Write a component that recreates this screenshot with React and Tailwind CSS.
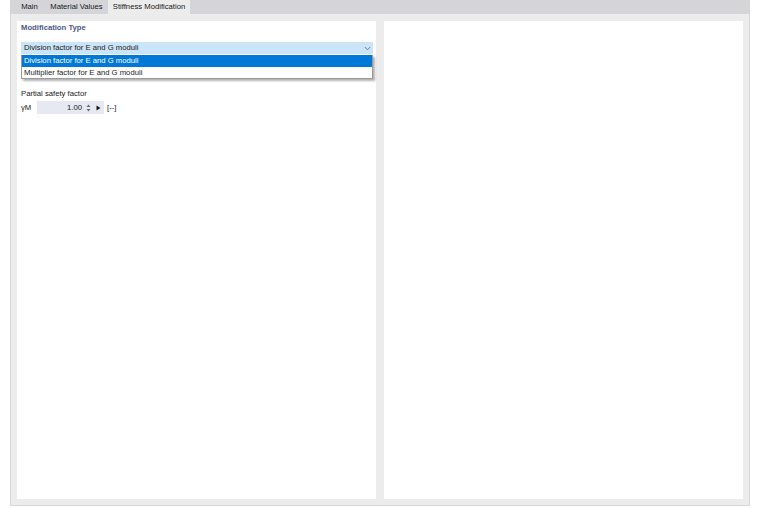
import React from 'react';

const font = { fontFamily: '"Liberation Sans", Arial, sans-serif' };

const Tab = ({ label, width, active }) => (
  <div
    className={`h-full flex items-center justify-center text-[7.7px] text-[#1a1a1a] ${width} ${active ? 'bg-[#ececec]' : ''}`}
  >
    {label}
  </div>
);

const Spinner = () => (
  <svg width="5" height="8" viewBox="0 0 5 8" className="shrink-0">
    <path d="M2.5 0.5 L4.5 3 L0.5 3 Z" fill="#6b6b6b" />
    <path d="M0.5 5 L4.5 5 L2.5 7.5 Z" fill="#6b6b6b" />
  </svg>
);

const PlayArrow = () => (
  <svg width="5" height="6" viewBox="0 0 5 6" className="shrink-0">
    <path d="M0.5 0.5 L4.5 3 L0.5 5.5 Z" fill="#1a1a1a" />
  </svg>
);

const Chevron = () => (
  <svg width="7" height="5" viewBox="0 0 7 5" className="shrink-0">
    <path d="M0.8 1 L3.5 3.8 L6.2 1" fill="none" stroke="#6b7280" strokeWidth="0.9" />
  </svg>
);

export default function App() {
  return (
    <div className="w-[760px] h-[508px] bg-white" style={font}>
      <div className="ml-[10px] w-[740px] h-[506px] flex flex-col">
        {/* tabs */}
        <div className="h-[14px] bg-[#d4d4d9] flex pl-[4px] shrink-0">
          <Tab label="Main" width="w-[31px]" />
          <Tab label="Material Values" width="w-[63px]" />
          <Tab label="Stiffness Modification" width="w-[82px]" active />
        </div>

        {/* content */}
        <div className="flex-1 bg-[#ececec] border-x border-b border-[#d6d6d6] pt-[7px] pb-[6px] px-[6px] flex gap-[8px]">
          <div className="w-[359px] bg-white pl-[4px] pr-[3px] text-[7.7px] text-[#1a1a1a]">
            <div className="mt-[1px] h-[11px] leading-[11px] font-bold text-[#4b5a88]">Modification Type</div>

            <div className="relative mt-[9px]">
              <div className="h-[12px] bg-[#cce4f7] flex items-center justify-between pl-[3px] pr-[2px]">
                <span>Division factor for E and G moduli</span>
                <Chevron />
              </div>
              <div className="absolute left-0 right-0 top-[13px] bg-white border border-[#9a9a9a] border-t-0 shadow-[2px_2px_2px_rgba(0,0,0,0.3)] z-10">
                <div className="h-[12px] bg-[#0078d7] text-white flex items-center pl-[2px]">
                  Division factor for E and G moduli
                </div>
                <div className="h-[11px] flex items-center pl-[2px]">Multiplier factor for E and G moduli</div>
              </div>
            </div>

            <div className="mt-[34px] h-[11px] leading-[11px]">Partial safety factor</div>

            <div className="mt-[2px] h-[13px] flex items-center">
              <span className="w-[16px]">γM</span>
              <div className="w-[67px] h-[13px] bg-[#e6e8f2] flex items-center">
                <span className="flex-1 text-right pr-[4px]">1.00</span>
                <Spinner />
                <span className="w-[5px]" />
                <PlayArrow />
                <span className="w-[3px]" />
              </div>
              <span className="ml-[3px]">[--]</span>
            </div>
          </div>

          <div className="w-[359px] bg-white" />
        </div>
      </div>
    </div>
  );
}
